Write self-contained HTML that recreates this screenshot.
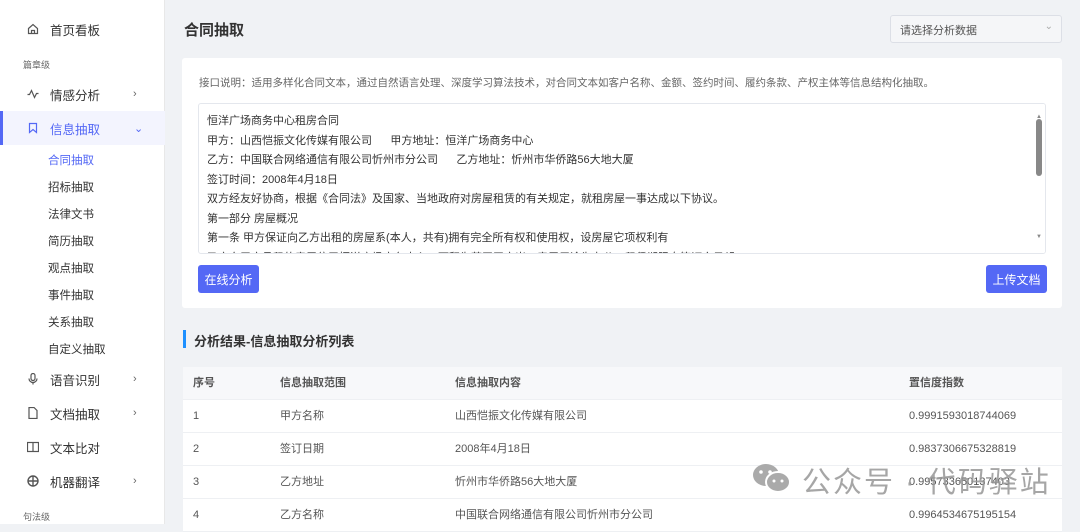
<!DOCTYPE html>
<html><head><meta charset="utf-8"><style>
*{margin:0;padding:0;box-sizing:border-box}
body{width:1080px;height:524px;overflow:hidden;background:#f0f2f5;font-family:"Liberation Sans","Noto Sans CJK SC",sans-serif;color:#333;position:relative}
.side{position:absolute;left:0;top:0;width:165px;height:524px;background:#fff;border-right:1px solid #e8e8e8}
.it{position:absolute;left:0;width:165px;height:34px;font-size:12.5px;color:#333;display:flex;align-items:center}
.it .ic{position:absolute;left:27px;width:12px;height:12px}
.it .tx{position:absolute;left:50px}
.it .ar{position:absolute;left:133px;font-size:11px;color:#666}
.grp{position:absolute;left:23px;font-size:9px;color:#666}
.sub{position:absolute;left:48px;font-size:11.5px;color:#333}
.card{position:absolute;background:#fff;border-radius:3px}
.btn{position:absolute;background:#5468f5;color:#fff;font-size:12px;border-radius:3px;display:flex;align-items:center;justify-content:center}
.row{position:absolute;left:183px;width:879px;height:33px;border-bottom:1px solid #eef0f3;font-size:11px;color:#555;background:#fff}
.row span{position:absolute;top:0;line-height:33px}
</style></head><body>
<div class="side">
<div class="it" style="top:12px"><svg class="ic" viewBox="0 0 12 12" fill="none" stroke="#555" stroke-width="1.2"><path d="M1.5 5.5L6 1.5l4.5 4v5h-9z"/><path d="M4.5 10.5v-3h3v3"/></svg><span class="tx">首页看板</span></div>
<div class="grp" style="top:58px">篇章级</div>
<div class="it" style="top:77px"><svg class="ic" viewBox="0 0 12 12" fill="none" stroke="#555" stroke-width="1.2"><path d="M0.5 6.5h2l2-4 3 7 2-4h2"/></svg><span class="tx">情感分析</span><span class="ar">›</span></div>
<div class="it" style="top:111px;background:#f3f4fe;border-left:3px solid #5468f5"><svg class="ic" viewBox="0 0 12 12" fill="none" stroke="#5468f5" stroke-width="1.2" style="left:24px"><path d="M2.5 1.5h7v9l-3.5-3-3.5 3z"/></svg><span class="tx" style="left:47px;color:#5468f5">信息抽取</span><span class="ar" style="left:131px;color:#5468f5">⌄</span></div>
<div class="sub" style="top:152px;color:#5468f5">合同抽取</div>
<div class="sub" style="top:179px">招标抽取</div>
<div class="sub" style="top:206px">法律文书</div>
<div class="sub" style="top:233px">简历抽取</div>
<div class="sub" style="top:260px">观点抽取</div>
<div class="sub" style="top:287px">事件抽取</div>
<div class="sub" style="top:314px">关系抽取</div>
<div class="sub" style="top:341px">自定义抽取</div>
<div class="it" style="top:362px"><svg class="ic" viewBox="0 0 12 12" fill="none" stroke="#555" stroke-width="1.2"><rect x="4" y="0.5" width="4" height="7" rx="2"/><path d="M2 5.5a4 4 0 008 0M6 9.5v2"/></svg><span class="tx">语音识别</span><span class="ar">›</span></div>
<div class="it" style="top:396px"><svg class="ic" viewBox="0 0 12 12" fill="none" stroke="#555" stroke-width="1.2"><path d="M2 0.5h5l3 3v8H2z"/></svg><span class="tx">文档抽取</span><span class="ar">›</span></div>
<div class="it" style="top:430px"><svg class="ic" viewBox="0 0 12 12" fill="none" stroke="#555" stroke-width="1.2"><rect x="0.5" y="1.5" width="11" height="9"/><path d="M6 1.5v9"/></svg><span class="tx">文本比对</span></div>
<div class="it" style="top:464px"><svg class="ic" viewBox="0 0 12 12" fill="none" stroke="#555" stroke-width="1.4"><circle cx="6" cy="6" r="5"/><path d="M1 6h10M6 1v10"/></svg><span class="tx">机器翻译</span><span class="ar">›</span></div>
<div class="grp" style="top:510px">句法级</div>
</div>

<div style="position:absolute;left:184px;top:19px;font-size:15px;font-weight:bold;color:#333">合同抽取</div>
<div style="position:absolute;left:890px;top:15px;width:172px;height:28px;background:#f5f6f8;border:1px solid #dcdfe6;border-radius:3px;font-size:11px;color:#555;padding:6px 9px">请选择分析数据<span style="position:absolute;right:8px;top:5px;color:#aaa;font-size:10px">⌄</span></div>

<div class="card" style="left:182px;top:58px;width:880px;height:250px"></div>
<div style="position:absolute;left:199px;top:75px;font-size:10.5px;color:#666">接口说明：适用多样化合同文本，通过自然语言处理、深度学习算法技术，对合同文本如客户名称、金额、签约时间、履约条款、产权主体等信息结构化抽取。</div>
<div style="position:absolute;left:198px;top:103px;width:848px;height:151px;border:1px solid #e4e7ed;border-radius:3px;overflow:hidden;font-size:11px;color:#333;line-height:19.5px;padding:8px 8px">
恒洋广场商务中心租房合同<br>甲方：山西恺振文化传媒有限公司&nbsp;&nbsp;&nbsp;&nbsp;&nbsp; 甲方地址：恒洋广场商务中心<br>乙方：中国联合网络通信有限公司忻州市分公司&nbsp;&nbsp;&nbsp;&nbsp;&nbsp; 乙方地址：忻州市华侨路56大地大厦<br>签订时间：2008年4月18日<br>双方经友好协商，根据《合同法》及国家、当地政府对房屋租赁的有关规定，就租房屋一事达成以下协议。<br>第一部分 房屋概况<br>第一条 甲方保证向乙方出租的房屋系(本人，共有)拥有完全所有权和使用权，设房屋它项权利有<br>乙方向甲方承租的房屋位于恒洋广场商务中心，面积为若干平方米，房屋用途为办公，租赁期限自签订之日起
<div style="position:absolute;right:0;top:0;width:13px;height:151px;background:#fff"></div>
<div style="position:absolute;right:3px;top:15px;width:6px;height:57px;background:#888;border-radius:3px"></div>
<div style="position:absolute;right:3px;top:4px;font-size:6px;color:#888">▲</div>
<div style="position:absolute;right:3px;top:124px;font-size:6px;color:#888">▼</div>
</div>
<div class="btn" style="left:198px;top:265px;width:61px;height:28px">在线分析</div>
<div class="btn" style="left:986px;top:265px;width:61px;height:28px">上传文档</div>

<div style="position:absolute;left:183px;top:330px;width:3px;height:18px;background:#1e90ff"></div>
<div style="position:absolute;left:194px;top:331px;font-size:13px;font-weight:bold;color:#333">分析结果-信息抽取分析列表</div>
<div class="row" style="top:367px;background:#f7f8fa;font-weight:bold;color:#555"><span style="left:10px">序号</span><span style="left:97px">信息抽取范围</span><span style="left:272px">信息抽取内容</span><span style="left:726px">置信度指数</span></div>
<div class="row" style="top:400px"><span style="left:10px">1</span><span style="left:97px">甲方名称</span><span style="left:272px">山西恺振文化传媒有限公司</span><span style="left:726px">0.9991593018744069</span></div>
<div class="row" style="top:433px"><span style="left:10px">2</span><span style="left:97px">签订日期</span><span style="left:272px">2008年4月18日</span><span style="left:726px">0.9837306675328819</span></div>
<div class="row" style="top:466px"><span style="left:10px">3</span><span style="left:97px">乙方地址</span><span style="left:272px">忻州市华侨路56大地大厦</span><span style="left:726px">0.995733650137403</span></div>
<div class="row" style="top:499px"><span style="left:10px">4</span><span style="left:97px">乙方名称</span><span style="left:272px">中国联合网络通信有限公司忻州市分公司</span><span style="left:726px">0.9964534675195154</span></div>

<svg style="position:absolute;left:752px;top:462px" width="40" height="32" viewBox="0 0 40 32"><ellipse cx="14" cy="13" rx="13" ry="11" fill="#aaa"/><ellipse cx="26" cy="20" rx="12" ry="10" fill="#aaa" stroke="#fff" stroke-width="2"/><circle cx="9" cy="10" r="1.8" fill="#fff"/><circle cx="18" cy="10" r="1.8" fill="#fff"/><circle cx="22" cy="19" r="1.5" fill="#fff"/><circle cx="30" cy="19" r="1.5" fill="#fff"/></svg>
<div style="position:absolute;left:802px;top:459px;font-size:29px;color:rgba(150,150,150,0.85);letter-spacing:2px;white-space:nowrap">公众号 · 代码驿站</div>
</body></html>
